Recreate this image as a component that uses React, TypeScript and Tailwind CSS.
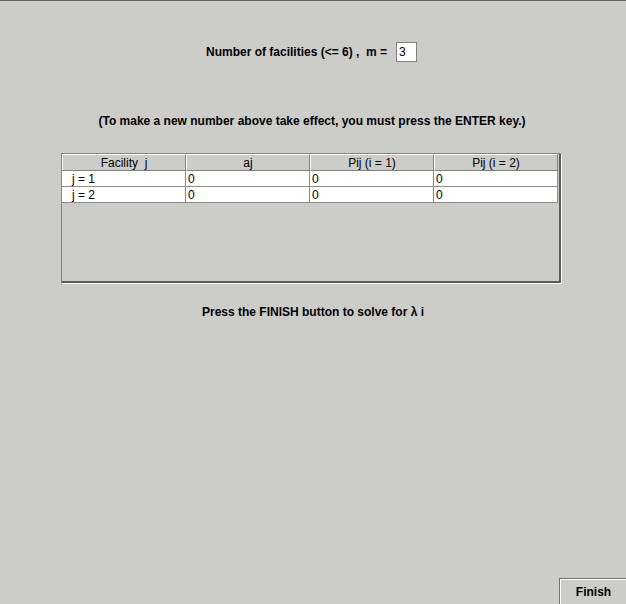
import React from "react";

const font = { fontFamily: '"Liberation Sans", Arial, sans-serif' };

const headers = ["Facility  j", "aj", "Pij (i = 1)", "Pij (i = 2)"];
const rows = [
  ["j = 1", "0", "0", "0"],
  ["j = 2", "0", "0", "0"],
];

export default function App() {
  return (
    <div
      className="w-[626px] h-[604px] bg-[#cccdc9] border-t border-[#5e605e] flex flex-col text-black text-[12px] leading-[14px] relative"
      style={font}
    >
      <div className="mt-[41px] flex items-center pl-[206px] h-[20px]">
        <span className="font-bold">Number of facilities (&lt;= 6) ,&nbsp;&nbsp;m =</span>
        <div className="ml-[9px] w-[21px] h-[20px] bg-white border border-[#7f807e] flex items-center pl-[2px] text-[12px]">
          3
        </div>
      </div>

      <div className="mt-[52px] text-center font-bold pr-[2px]">
        (To make a new number above take effect, you must press the ENTER key.)
      </div>

      <div className="mt-[25px] ml-[61px] w-[501px] h-[131px] border-t border-l border-[#858683] border-b border-r border-b-white border-r-white">
        <div className="w-full h-full border-b-2 border-r-2 border-[#5a5b59] flex flex-col">
          <div className="flex h-[17px]">
            {headers.map((h, i) => (
              <div
                key={i}
                className="w-[124px] h-[17px] bg-[#cccdc9] border-t border-l border-white border-b border-r border-b-[#7f807e] border-r-[#7f807e] flex items-center justify-center font-normal whitespace-pre"
              >
                {h}
              </div>
            ))}
          </div>
          {rows.map((r, ri) => (
            <div key={ri} className="flex h-[16px]">
              {r.map((c, ci) => (
                <div
                  key={ci}
                  className={`w-[124px] h-[16px] bg-white border-r border-b border-[#8c8d8a] flex items-center ${ci === 0 ? "pl-[10px]" : "pl-[2px]"}`}
                >
                  {c}
                </div>
              ))}
            </div>
          ))}
        </div>
      </div>

      <div className="mt-[21px] text-center font-bold">
        Press the FINISH button to solve for λ i
      </div>

      <div className="mt-auto flex justify-end">
        <div className="w-[67px] h-[26px] border border-[#6f706e] border-r-0 border-b-0 flex">
          <div className="flex-1 border-t border-l border-white flex items-center justify-center font-bold">
            Finish
          </div>
        </div>
      </div>
    </div>
  );
}
